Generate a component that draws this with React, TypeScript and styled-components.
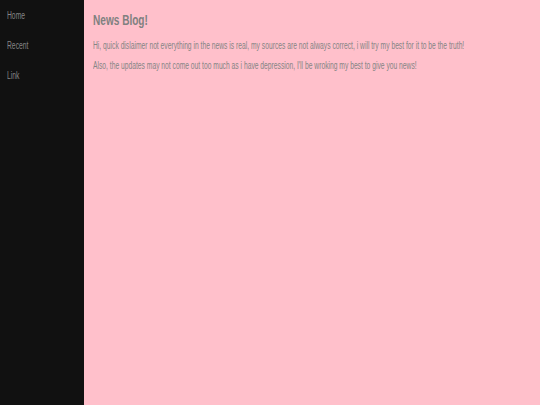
import React from 'react';
import styled, {createGlobalStyle} from "styled-components";

const GlobalStyle = createGlobalStyle`
  html, body {
    margin: 0;
    height: 100%;
  }
  body {
    font-family: "Liberation Sans", Arial, sans-serif;
    background-color: pink;
  }
  #root {
    height: 100%;
  }
`

function App() {
    return (
        <>
            <GlobalStyle/>
            <Page>
                <Sidebar>
                    <NavLink href="#">Home</NavLink>
                    <NavLink href="#">Recent</NavLink>
                    <NavLink href="#">Link</NavLink>
                </Sidebar>
                <Main>
                    <Title>News Blog!</Title>
                    <Text>Hi, quick dislaimer not everything in the news is real, my sources are not always correct, i will try my best for it to be the truth!</Text>
                    <Text>Also, the updates may not come out too much as i have depression, I'll be wroking my best to give you news!</Text>
                </Main>
            </Page>
        </>
    );
}

export default App;

// the reference uses a very condensed face, so text is squeezed horizontally
const Page = styled.div`
  display: flex;
  min-height: 405px;
`
const Sidebar = styled.nav`
  width: 84px;
  flex-shrink: 0;
  background-color: #111;
  display: flex;
  flex-direction: column;
  padding-top: 10px;
`
const NavLink = styled.a`
  display: block;
  height: 30px;
  padding-left: 7px;
  color: #858585;
  font-size: 10px;
  line-height: 12px;
  text-decoration: none;
  white-space: nowrap;
  transform: scaleX(0.675);
  transform-origin: 7px 0;
`
const Main = styled.main`
  flex: 1;
  min-width: 0;
  background-color: pink;
  padding: 12px 9px;
`
const Title = styled.h1`
  margin: 0 0 11px;
  font-size: 14px;
  line-height: 17px;
  color: #808080;
  white-space: nowrap;
  transform: scaleX(0.72);
  transform-origin: left;
`
const Text = styled.p`
  margin: 0 0 8px;
  font-size: 10px;
  line-height: 12px;
  color: #858585;
  white-space: nowrap;
  transform: scaleX(0.672);
  transform-origin: left;
`
